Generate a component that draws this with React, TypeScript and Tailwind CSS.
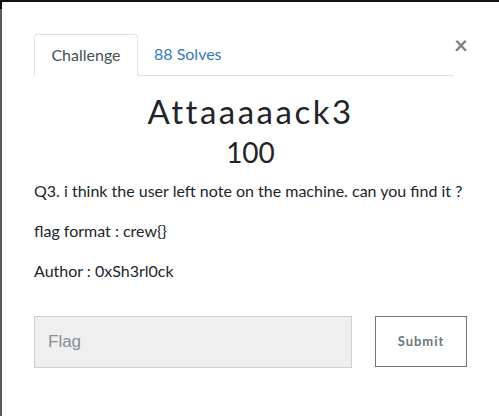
const lines = [
	"Q3. i think the user left note on the machine. can you find it ?",
	"flag format : crew{}",
	"Author : 0xSh3rl0ck"
];

const App = () => {
	return (
		<div className="w-[499px] h-[416px] bg-[#111] pt-[2px] flex overflow-hidden">
			<div className="w-[2px] bg-[#5a5a5a] mt-[7px]" />
			<div
				className="flex-1 bg-white pt-[32px] pl-[32px] pr-[32px] text-[#212529]"
				style={{ fontFamily: "Lato, 'Open Sans', sans-serif" }}
			>
				<div className="flex items-start">
					<div className="flex-1 flex border-b border-[#dee2e6] h-[42px]">
						<div className="w-[104px] h-[42px] -mb-px border border-[#dee2e6] border-b-white bg-white rounded-t-[4px] flex items-center justify-center text-[16px] text-[#495057] pb-[1px]">
							Challenge
						</div>
						<div className="px-[16px] flex items-center text-[16px] text-[#337ab7] pb-[1px]">
							88 Solves
						</div>
					</div>
					<div className="w-[13px] flex justify-end">
						<span className="text-[24px] font-bold leading-none text-[#808080] -mt-[1px] mr-[-1px]">×</span>
					</div>
				</div>

				<div className="text-center text-[33px] tracking-[2.5px] leading-none mt-[19px] text-[#212529]">
					Attaaaaack3
				</div>
				<div className="text-center text-[28px] leading-none mt-[10px] text-[#212529]">
					100
				</div>

				<div className="mt-[13px] flex flex-col gap-[16px] text-[16px] leading-[24px]">
					{lines.map((line) => (
						<p key={line}>{line}</p>
					))}
				</div>

				<div className="mt-[33px] flex items-start justify-between">
					<div
						className="w-[318px] h-[52px] bg-[#efefef] border border-[#ccd2d8] flex items-center pl-[13px] text-[17px] text-[#888e94]"
						style={{ fontFamily: "'Liberation Sans', Arial, sans-serif" }}
					>
						Flag
					</div>
					<button className="w-[92px] h-[51px] border border-[#6c757d] bg-white text-[13px] font-bold tracking-[1px] text-[#6c757d]">
						Submit
					</button>
				</div>
			</div>
		</div>
	);
};

export default App;
